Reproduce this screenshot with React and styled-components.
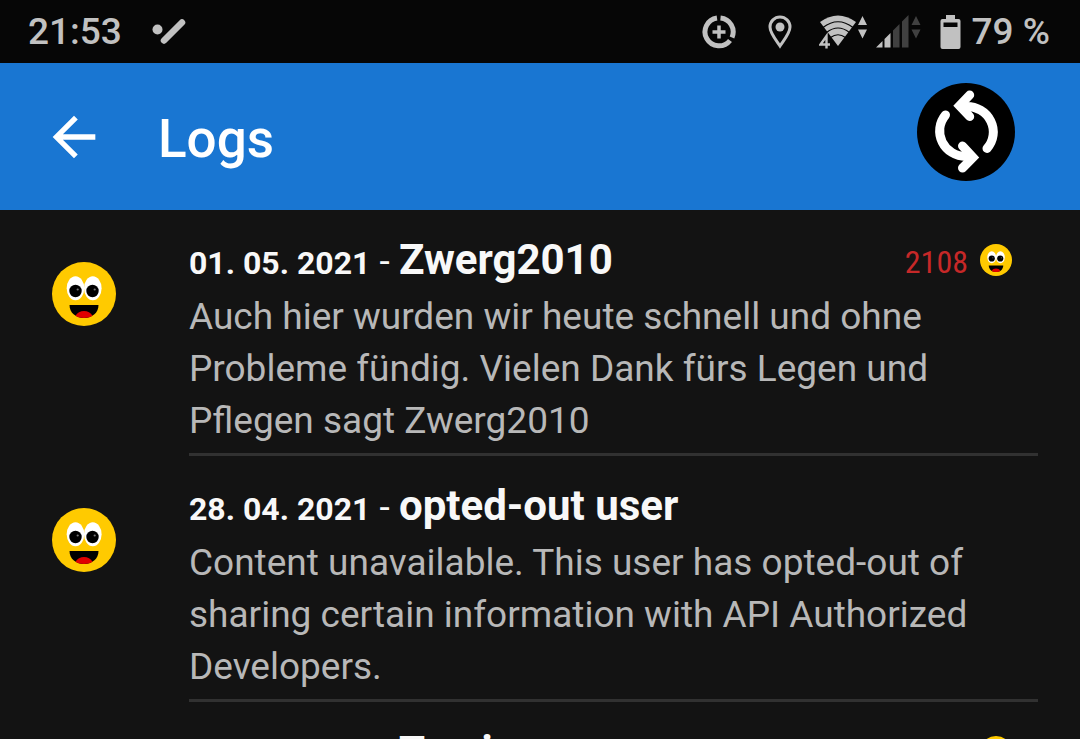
import React from "react";
import styled, { createGlobalStyle } from "styled-components";

const GlobalStyle = createGlobalStyle`
  *, *::before, *::after { box-sizing: border-box; }
  html, body, #root { height: 100%; }
  body {
    margin: 0;
    background: #131313;
    font-family: Roboto, "Liberation Sans", sans-serif;
  }
`;

const Screen = styled.div`
  height: 100vh;
  display: flex;
  flex-direction: column;
  overflow: hidden;
`;

const StatusBar = styled.div`
  flex: none;
  display: flex;
  align-items: center;
  justify-content: space-between;
  height: 63px;
  padding: 0 30px 0 28px;
  background: #060606;
  color: #c1c1c1;
  font-size: 37px;
  font-weight: 500;
  line-height: 64px;
`;

const StatusGroup = styled.div`
  display: flex;
  align-items: center;
`;

const StatusText = styled.span`
  margin-left: ${(p) => p.$gap || 0}px;
`;

const StatusIcon = styled.svg`
  display: block;
  flex: none;
  margin-left: ${(p) => p.$gap}px;
`;

const AppBar = styled.header`
  flex: none;
  display: flex;
  align-items: center;
  height: 147px;
  padding: 0 65px 0 42px;
  background: #1976d2;
  color: #fff;
`;

const IconButton = styled.button`
  display: block;
  flex: none;
  padding: 0;
  border: 0;
  background: none;
  color: inherit;
  cursor: pointer;
  svg { display: block; }
`;

const Title = styled.h1`
  flex: 1;
  margin: 4px 0 0 52px;
  font-size: 53px;
  font-weight: 500;
  line-height: 64px;
`;

const SyncButton = styled(IconButton)`
  margin-bottom: 10px;
`;

const LogList = styled.ul`
  flex: 1;
  min-height: 0;
  overflow: hidden;
  margin: 0;
  padding: 0 42px 0 52px;
  list-style: none;
`;

const LogRow = styled.li`
  display: flex;
  align-items: flex-start;
  gap: 73px;
`;

const TypeIcon = styled.div`
  flex: none;
  padding-top: 52px;
  svg { display: block; }
`;

const LogContent = styled.article`
  flex: 1;
  min-width: 0;
  padding: 24px 0 6px;
  border-bottom: 3px solid #313131;
`;

const LogHeader = styled.div`
  display: flex;
  align-items: center;
  justify-content: space-between;
  height: 52px;
  padding-right: 26px;
  margin-bottom: 5px;
`;

const LogHeading = styled.h2`
  margin: 0;
  padding-top: 2px;
  color: #f8f8f8;
  font-size: 42px;
  font-weight: 700;
  line-height: 52px;
`;

const LogDate = styled.time`
  font-size: 32px;
`;

const Dash = styled.span`
  font-size: 37px;
  font-weight: 400;
`;

const FindCount = styled.div`
  display: flex;
  align-items: center;
  gap: 12px;
  color: #c62828;
  font-family: "Roboto Condensed", "Liberation Sans Narrow", Roboto, sans-serif;
  font-size: 32px;
  line-height: 52px;
  span { padding-top: 4px; }
  svg { display: block; }
`;

const LogText = styled.p`
  margin: 0;
  color: #b8b8b8;
  font-size: 37px;
  line-height: 52px;
`;

function Smiley({ size }) {
  return (
    <svg width={size} height={size} viewBox="0 0 64 64" aria-hidden="true">
      <circle cx="32" cy="32" r="32" fill="#ffca00" />
      <ellipse cx="23.500" cy="26.300" rx="8.800" ry="12" fill="#fff" />
      <ellipse cx="40.800" cy="26.300" rx="8.800" ry="12" fill="#fff" />
      <circle cx="23.500" cy="29" r="6.200" fill="#000" />
      <circle cx="40.500" cy="29" r="6.200" fill="#000" />
      <circle cx="25.700" cy="27.500" r="1.100" fill="#777" />
      <circle cx="42.700" cy="27.500" r="1.100" fill="#777" />
      <path d="M17.500 43h29c0 7.500-6 13-14.500 13S17.500 50.500 17.500 43z" fill="#000" />
      <path d="M23.500 53.800c3-6.500 14-6.500 17 0-4 2.900-13 2.900-17 0z" fill="#e00000" />
    </svg>
  );
}

const logs = [
  {
    date: "01. 05. 2021",
    iso: "2021-05-01",
    author: "Zwerg2010",
    finds: 2108,
    text: "Auch hier wurden wir heute schnell und ohne Probleme fündig. Vielen Dank fürs Legen und Pflegen sagt Zwerg2010",
  },
  {
    date: "28. 04. 2021",
    iso: "2021-04-28",
    author: "opted-out user",
    text: "Content unavailable. This user has opted-out of sharing certain information with API Authorized Developers.",
  },
  { author: "Tomi", finds: 2108, date: "25. 04. 2021", iso: "2021-04-25", text: "" },
];

function Log({ log }) {
  return (
    <LogRow>
      <TypeIcon><Smiley size={64} /></TypeIcon>
      <LogContent>
        <LogHeader>
          <LogHeading>
            <LogDate dateTime={log.iso}>{log.date}</LogDate>
            <Dash> - </Dash>
            {log.author}
          </LogHeading>
          {log.finds && (
            <FindCount>
              <span>{log.finds}</span>
              <Smiley size={32} />
            </FindCount>
          )}
        </LogHeader>
        <LogText>{log.text}</LogText>
      </LogContent>
    </LogRow>
  );
}

export default function App() {
  return (
    <>
      <GlobalStyle />
      <Screen>
        <StatusBar>
          <StatusGroup>
            <StatusText>21:53</StatusText>
            <StatusIcon $gap={30} width="34" height="26" viewBox="0 0 34 26" fill="#c1c1c1">
              <circle cx="5.500" cy="10.500" r="5" />
              <path d="M12 21.500L30 3.500" stroke="#c1c1c1" strokeWidth="6.500" strokeLinecap="round" />
            </StatusIcon>
          </StatusGroup>
          <StatusGroup>
            <StatusIcon $gap={0} width="34" height="34" viewBox="0 0 34 34" fill="none" stroke="#c1c1c1">
              <path d="M18.500 3A14 14 0 0 1 30 22.500" strokeWidth="5" />
              <path d="M15 3A14 14 0 1 0 28 25.500" strokeWidth="5" />
              <path d="M17 10.500v13M10.500 17h13" strokeWidth="3.500" />
            </StatusIcon>
            <StatusIcon $gap={32} width="24" height="34" viewBox="0 0 24 34" fill="none" stroke="#c1c1c1">
              <path d="M12 31C8 25 2 18 2 12a10 10 0 0 1 20 0c0 6-6 13-10 19z" strokeWidth="3" />
              <circle cx="12" cy="12" r="4.500" fill="#c1c1c1" stroke="none" />
            </StatusIcon>
            <StatusIcon $gap={27} width="48" height="34" viewBox="0 0 48 34" fill="#c1c1c1">
              <path d="M1 7Q19-6 37 7L19 31z" />
              <path d="M4 12.500Q19 1 34 12.500M7.500 17.500Q19 8.500 30.500 17.500M11.500 22.500Q19 17 26.500 22.500" fill="none" stroke="#060606" strokeWidth="1.200" />
              <path d="M0 18.500h8l4 6V34H0z" fill="#060606" />
              <path d="M7.500 33.500V21L1.500 29.500h9.500" fill="none" stroke="#c1c1c1" strokeWidth="2.400" />
              <path d="M43.500 1l4.500 9h-9zM43.500 23.500l4.500-9h-9z" />
            </StatusIcon>
            <StatusIcon $gap={8} width="46" height="34" viewBox="0 0 46 34">
              <path d="M1 32.500l6.500-6.500v6.500zM9.500 24l6-6v14.500h-6z" fill="#c1c1c1" />
              <path d="M18 15.500l6.500-6.500v23.500H18zM27 6.500L33.500 0v32.500H27zM41 1l4.500 9h-9zM41 23.500l4.500-9h-9z" fill="#404040" />
            </StatusIcon>
            <StatusIcon $gap={19} width="21" height="34" viewBox="0 0 21 34">
              <path fill="#c1c1c1" fillRule="evenodd" d="M6 0h9v4h3.500q2 0 2 2v26q0 2-2 2H2.500q-2 0-2-2V6q0-2 2-2H6zM3.500 7.500v4.500h14V7.500z" />
            </StatusIcon>
            <StatusText $gap={11}>79 %</StatusText>
          </StatusGroup>
        </StatusBar>
        <AppBar>
          <IconButton type="button" aria-label="Back">
            <svg width="64" height="64" viewBox="0 0 24 24" fill="currentColor">
              <path d="M20 11H7.830l5.590-5.590L12 4l-8 8 8 8 1.410-1.410L7.830 13H20v-2z" />
            </svg>
          </IconButton>
          <Title>Logs</Title>
          <SyncButton type="button" aria-label="Refresh">
            <svg width="98" height="98" viewBox="0 0 98 98" fill="none" stroke="#fff" strokeWidth="9" strokeLinecap="round">
              <circle cx="49" cy="49" r="49" fill="#000" stroke="none" />
              <path d="M70 65.500A26.500 25.500 0 0 0 49 23.500H44" />
              <path d="M28.500 32A26.500 25.500 0 0 0 49 73.500H54" />
              <path d="M52.700 12L42.500 22.700l10.200 10.800" strokeLinejoin="miter" />
              <path d="M45.500 63L56 74.300 45.500 85" strokeLinejoin="miter" />
            </svg>
          </SyncButton>
        </AppBar>
        <LogList>
          {logs.map((log) => <Log key={log.iso} log={log} />)}
        </LogList>
      </Screen>
    </>
  );
}
